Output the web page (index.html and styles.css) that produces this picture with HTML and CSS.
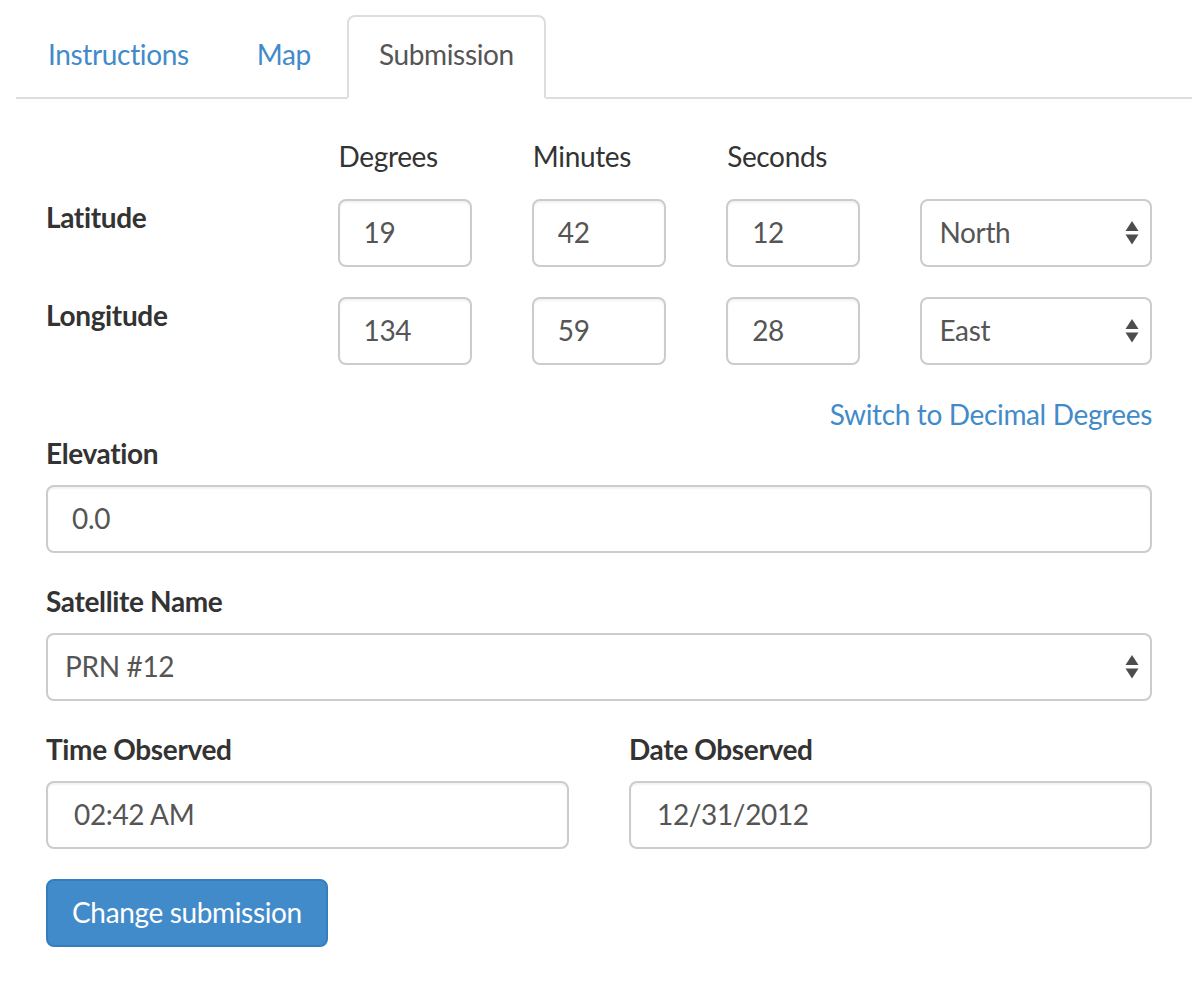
FILE: index.html
```html
<!DOCTYPE html>
<html lang="en">
<head>
<meta charset="utf-8">
<title>Submission</title>
<link rel="stylesheet" href="styles.css">
</head>
<body>
<div class="page">
  <ul class="tabs">
    <li class="tab"><a href="#">Instructions</a></li>
    <li class="tab"><a href="#">Map</a></li>
    <li class="tab active"><a href="#">Submission</a></li>
  </ul>
  <form class="panel">
    <div class="coord-grid coord-head">
      <div></div>
      <div class="col-head">Degrees</div>
      <div class="col-head">Minutes</div>
      <div class="col-head">Seconds</div>
      <div></div>
    </div>
    <div class="coord-grid coord-rows">
      <label class="row-label">Latitude</label>
      <input class="control" type="text" value="19">
      <input class="control" type="text" value="42">
      <input class="control" type="text" value="12">
      <div class="select-wrap">
        <select class="control select"><option>North</option><option>South</option></select>
        <svg class="caret" width="14" height="24" viewBox="0 0 14 24"><polygon points="7,0 13.5,10 0.5,10"/><polygon points="0.5,13.5 13.5,13.5 7,23.5"/></svg>
      </div>
      <label class="row-label">Longitude</label>
      <input class="control" type="text" value="134">
      <input class="control" type="text" value="59">
      <input class="control" type="text" value="28">
      <div class="select-wrap">
        <select class="control select"><option>East</option><option>West</option></select>
        <svg class="caret" width="14" height="24" viewBox="0 0 14 24"><polygon points="7,0 13.5,10 0.5,10"/><polygon points="0.5,13.5 13.5,13.5 7,23.5"/></svg>
      </div>
    </div>
    <div class="switch-row"><a href="#" class="link">Switch to Decimal Degrees</a></div>
    <div class="field">
      <label class="field-label">Elevation</label>
      <input class="control" type="text" value="0.0">
    </div>
    <div class="field">
      <label class="field-label">Satellite Name</label>
      <div class="select-wrap">
        <select class="control select"><option>PRN #12</option></select>
        <svg class="caret" width="14" height="24" viewBox="0 0 14 24"><polygon points="7,0 13.5,10 0.5,10"/><polygon points="0.5,13.5 13.5,13.5 7,23.5"/></svg>
      </div>
    </div>
    <div class="two-col">
      <div class="field">
        <label class="field-label">Time Observed</label>
        <input class="control wide-pad" type="text" value="02:42 AM">
      </div>
      <div class="field">
        <label class="field-label">Date Observed</label>
        <input class="control wide-pad" type="text" value="12/31/2012">
      </div>
    </div>
    <button type="button" class="btn">Change submission</button>
  </form>
</div>
</body>
</html>
```

FILE: styles.css
```css
* { box-sizing: border-box; }
html, body { margin: 0; padding: 0; background: #fff; }
body {
  font-family: Lato, "Open Sans", sans-serif;
  font-size: 28px;
  line-height: 40px;
  letter-spacing: -0.35px;
  color: #333;
}
.page {
  padding: 15px 0 0 16px;
}
.tabs {
  list-style: none;
  margin: 0;
  padding: 0;
  display: flex;
  border-bottom: 2px solid #ddd;
}
.tab {
  margin-bottom: -2px;
  margin-right: 4px;
}
.tab a {
  display: block;
  padding: 17px 30px 23px;
  line-height: 40px;
  border: 2px solid transparent;
  border-radius: 8px 8px 0 0;
  color: #428bca;
  text-decoration: none;
}
.tab.active a {
  color: #555;
  background: #fff;
  border-color: #ddd #ddd transparent;
}
.panel {
  width: 1166px;
  margin: 0;
  padding: 38px 30px 40px 30px;
}
.coord-grid {
  display: grid;
  grid-template-columns: 231.5fr 134.3fr 134.3fr 134.3fr 231.5fr;
  column-gap: 60px;
}
.coord-head {
  margin-bottom: 22px;
}
.coord-rows {
  row-gap: 30px;
}
.col-head {
  line-height: 38px;
  padding-bottom: 2px;
  padding-left: 1px;
}
.row-label {
  font-weight: bold;
  line-height: 36px;
  align-self: start;
}
.control {
  display: block;
  width: 100%;
  height: 68px;
  margin: 0;
  padding: 0 24px 3px;
  font-family: inherit;
  font-size: 28px;
  letter-spacing: -0.35px;
  color: #555;
  background: #fff;
  border: 2px solid #ccc;
  border-radius: 8px;
  box-shadow: inset 0 2px 2px rgba(0,0,0,0.05);
  outline: none;
}
.wide-pad { padding-left: 26px; }
.select-wrap {
  position: relative;
}
.select {
  -webkit-appearance: none;
  appearance: none;
  padding-left: 17px;
  padding-right: 40px;
  box-shadow: none;
}
.caret {
  position: absolute;
  right: 13px;
  top: 50%;
  transform: translateY(-50%);
  fill: #4d4d4d;
  pointer-events: none;
}
.switch-row {
  margin-top: 30px;
  text-align: right;
  line-height: 38px;
  padding-bottom: 2px;
}
.link {
  color: #428bca;
  text-decoration: none;
}
.field {
  margin-bottom: 30px;
}
.field-label {
  display: block;
  font-weight: bold;
  line-height: 36px;
  margin-bottom: 14px;
}
.two-col {
  display: grid;
  grid-template-columns: 1fr 1fr;
  column-gap: 60px;
}
.btn {
  display: block;
  height: 68px;
  padding: 0 24px 3px;
  font-family: inherit;
  font-size: 28px;
  letter-spacing: -0.35px;
  color: #fff;
  background: #428bca;
  border: 2px solid #357ebd;
  border-radius: 8px;
  cursor: pointer;
}
```
